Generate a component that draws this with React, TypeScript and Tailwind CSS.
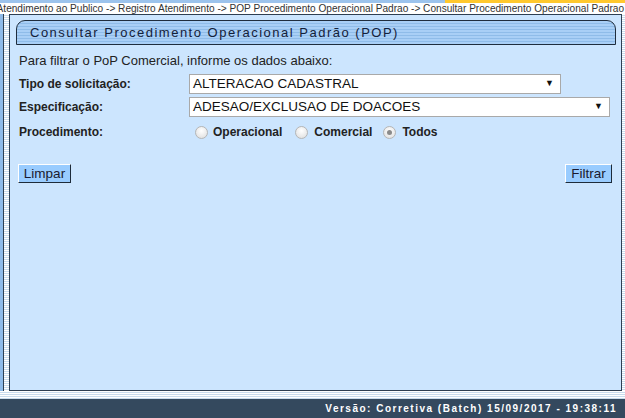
import React from "react";

const stripes =
  "bg-[repeating-linear-gradient(180deg,#ffffff_0px,#ffffff_1px,#c9dcee_1px,#c9dcee_2px)]";

function Radio({ checked }: { checked?: boolean }) {
  return (
    <span className="inline-flex w-[13px] h-[13px] rounded-full border border-[#b5b5b5] bg-[radial-gradient(circle_at_50%_35%,#ffffff,#dcdcdc)] items-center justify-center">
      {checked ? <span className="w-[5px] h-[5px] rounded-full bg-[#8a8a8a]" /> : null}
    </span>
  );
}

function Select({ value, width }: { value: string; width: string }) {
  return (
    <div
      className={`${width} h-[20px] bg-white border border-[#a9a9a9] flex items-center justify-between pl-[3px] pr-[6px] text-[13.5px] text-[#111]`}
    >
      <span>{value}</span>
      <span className="text-[9px] text-[#111]">▼</span>
    </div>
  );
}

export default function App() {
  return (
    <div
      className="w-[625px] h-[418px] flex flex-col bg-white overflow-hidden text-[#1a1a1a]"
      style={{ fontFamily: '"Liberation Sans", Arial, sans-serif' }}
    >
      <div className="h-[3px] flex">
        <div className="w-[445px] bg-[#9cc3ec]" />
        <div className="flex-1 bg-[#ffc82e]" />
      </div>
      <div className="h-[11px] flex justify-end overflow-hidden pr-[1px]">
        <span className="whitespace-nowrap text-[10.1px] leading-[11px] text-[#333]">
          Atendimento ao Publico -&gt; Registro Atendimento -&gt; POP Procedimento Operacional Padrao -&gt; Consultar Procedimento Operacional Padrao
        </span>
      </div>
      <div className="flex-1 flex min-h-0">
        <div className="w-[3px] bg-[#8fbbe9]" />
        <div className="w-[1px] bg-[#2e3f52]" />
        <div className={`w-[5px] ${stripes}`} />
        <div className="flex-1 flex flex-col border border-[#2e3f52] bg-[#cce5fe] pt-[5px] pl-[6px] pr-[5px]">
          <div className="h-[25px] rounded-tl-[9px] rounded-tr-[9px] border border-[#1f2d3d] bg-[repeating-linear-gradient(180deg,#a9cff6_0px,#a9cff6_2px,#8fbce9_2px,#8fbce9_3px)] flex items-center pl-[13px]">
            <span className="text-[13px] tracking-[1.5px] text-[#14213a]">
              Consultar Procedimento Operacional Padrão (POP)
            </span>
          </div>
          <div className="pl-[3px] pt-[8px] text-[12px]">
            <div className="h-[15px] leading-[15px] text-[13px] text-[#222]">
              Para filtrar o PoP Comercial, informe os dados abaixo:
            </div>
            <div className="flex items-center mt-[6px] h-[20px]">
              <span className="w-[170px] font-bold text-[#222]">Tipo de solicitação:</span>
              <Select value="ALTERACAO CADASTRAL" width="w-[372px]" />
            </div>
            <div className="flex items-center mt-[3px] h-[20px]">
              <span className="w-[170px] font-bold text-[#222]">Especificação:</span>
              <Select value="ADESAO/EXCLUSAO DE DOACOES" width="w-[421px]" />
            </div>
            <div className="flex items-center mt-[5px] h-[20px]">
              <span className="w-[170px] font-bold text-[#222]">Procedimento:</span>
              <span className="ml-[6px] flex items-center">
                <Radio />
                <span className="ml-[5px] font-bold text-[#222]">Operacional</span>
              </span>
              <span className="ml-[13px] flex items-center">
                <Radio />
                <span className="ml-[6px] font-bold text-[#222]">Comercial</span>
              </span>
              <span className="ml-[11px] flex items-center">
                <Radio checked />
                <span className="ml-[6px] font-bold text-[#222]">Todos</span>
              </span>
            </div>
          </div>
          <div className="flex justify-between mt-[22px] pl-[2px] pr-[4px]">
            <button className="w-[53px] h-[19px] bg-[#99ccff] border border-t-[#ffffff] border-l-[#ffffff] border-r-[#1d2b3a] border-b-[#1d2b3a] text-[13.5px] leading-[16px] text-[#1a1a2e]">
              Limpar
            </button>
            <button className="w-[47px] h-[19px] bg-[#99ccff] border border-t-[#ffffff] border-l-[#ffffff] border-r-[#1d2b3a] border-b-[#1d2b3a] text-[13.5px] leading-[16px] text-[#1a1a2e]">
              Filtrar
            </button>
          </div>
        </div>
        <div className={`w-[3px] ${stripes}`} />
      </div>
      <div className={`h-[8px] ${stripes}`} />
      <div className="h-[19px] bg-[#34495e] flex items-center justify-end pr-[8px]">
        <span className="text-[10px] font-bold tracking-[1.5px] text-white">
          Versão: Corretiva (Batch) 15/09/2017 - 19:38:11
        </span>
      </div>
    </div>
  );
}
